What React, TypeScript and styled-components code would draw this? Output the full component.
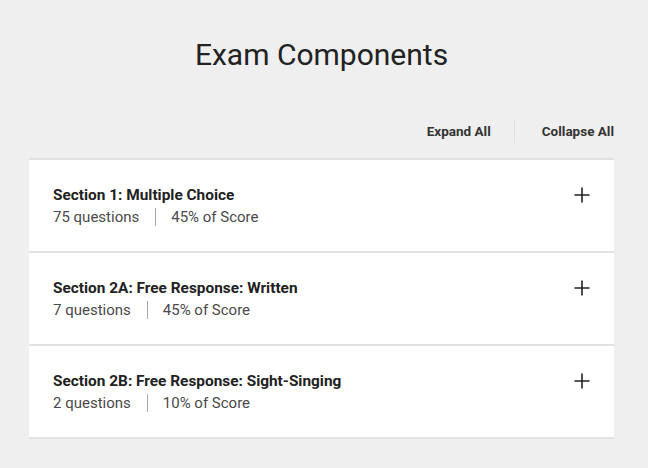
import React from 'react';
import styled, { createGlobalStyle } from 'styled-components';

const GlobalStyle = createGlobalStyle`
  body {
    margin: 0;
    background: #efefef;
    font-family: Roboto, 'Liberation Sans', sans-serif;
    color: #222;
  }
`;

const Page = styled.div`
  width: 585px;
  margin-left: 29px;
  padding-top: 37px;
`;

const Title = styled.h1`
  margin: 0;
  text-align: center;
  font-size: 30px;
  font-weight: 400;
  line-height: 36px;
  color: #222;
`;

const Toolbar = styled.div`
  display: flex;
  justify-content: flex-end;
  align-items: center;
  margin-top: 46px;
  height: 24px;
  margin-bottom: 15px;
`;

const ToolButton = styled.button<{ $side: 'left' | 'right' }>`
  background: none;
  border: none;
  padding: 0;
  padding-right: ${(p) => (p.$side === 'left' ? '23px' : '0')};
  padding-left: ${(p) => (p.$side === 'right' ? '27px' : '0')};
  font-family: inherit;
  font-size: 13.5px;
  font-weight: 700;
  color: #333;
  cursor: pointer;
`;

const ToolDivider = styled.span`
  width: 1px;
  height: 23px;
  background: #dedede;
`;

const Card = styled.div`
  background: #fff;
  border-bottom: 2px solid #e2e2e2;
`;

const Row = styled.div`
  display: flex;
  align-items: flex-start;
  justify-content: space-between;
  height: 93px;
  box-sizing: border-box;
  border-top: 2px solid #e2e2e2;
  padding: 26px 24px 0 24px;
`;

const RowText = styled.div`
  display: flex;
  flex-direction: column;
  gap: 4px;
`;

const RowTitle = styled.div`
  font-size: 15.4px;
  font-weight: 700;
  line-height: 18px;
  color: #222;
`;

const Meta = styled.div`
  display: flex;
  align-items: center;
  font-size: 15px;
  line-height: 18px;
  color: #4a4a4a;
`;

const MetaDivider = styled.span`
  width: 1px;
  height: 18px;
  background: #aaa;
  margin: 0 15px 0 16px;
`;

const PlusIcon = styled.svg`
  margin-top: 1px;
`;

const sections = [
  { title: 'Section 1: Multiple Choice', questions: '75 questions', score: '45% of Score' },
  { title: 'Section 2A: Free Response: Written', questions: '7 questions', score: '45% of Score' },
  { title: 'Section 2B: Free Response: Sight-Singing', questions: '2 questions', score: '10% of Score' },
];

const App: React.FC = () => {
  return (
    <Page>
      <GlobalStyle />
      <Title>Exam Components</Title>
      <Toolbar>
        <ToolButton $side="left">Expand All</ToolButton>
        <ToolDivider />
        <ToolButton $side="right">Collapse All</ToolButton>
      </Toolbar>
      <Card>
        {sections.map((s) => (
          <Row key={s.title}>
            <RowText>
              <RowTitle>{s.title}</RowTitle>
              <Meta>
                {s.questions}
                <MetaDivider />
                {s.score}
              </Meta>
            </RowText>
            <PlusIcon width="16" height="16" viewBox="0 0 16 16">
              <path d="M8 0.5v15M0.5 8h15" stroke="#222" strokeWidth="1.6" fill="none" />
            </PlusIcon>
          </Row>
        ))}
      </Card>
    </Page>
  );
};

export default App;
